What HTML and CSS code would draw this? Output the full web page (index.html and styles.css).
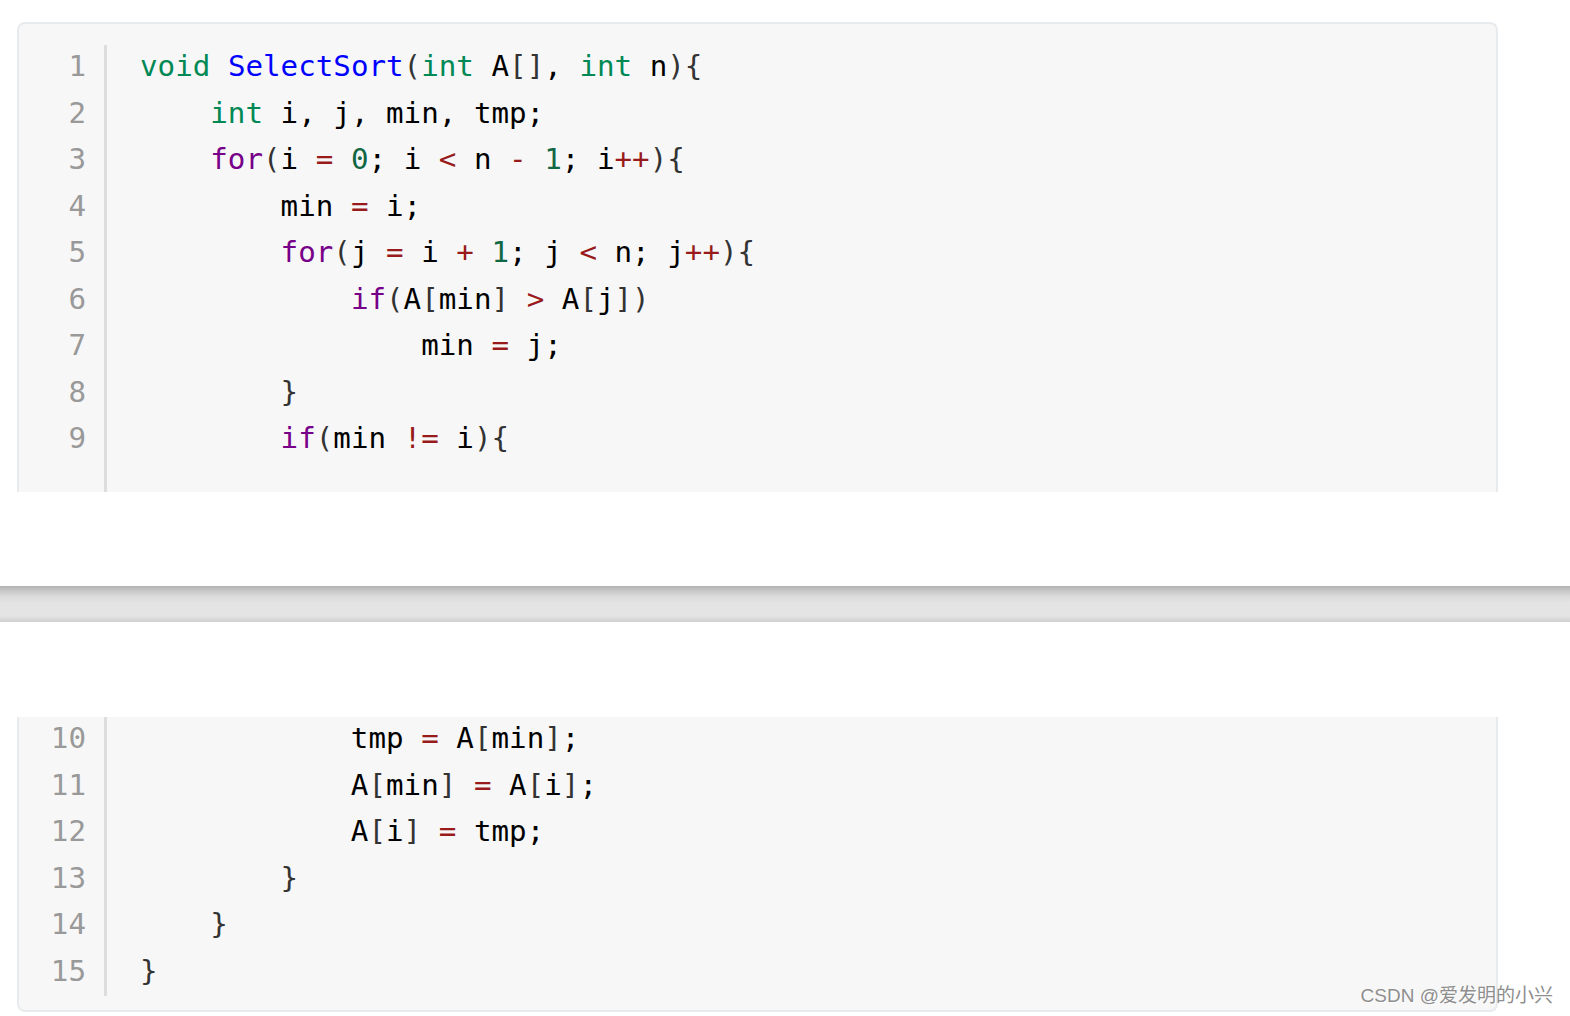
FILE: index.html
```html
<!DOCTYPE html>
<html>
<head>
<meta charset="utf-8">
<link rel="stylesheet" href="styles.css">
</head>
<body>
<div class="page">
  <section class="part part-top">
    <div class="card card-top">
      <div class="gutter">
        <div class="ln">1</div><div class="ln">2</div><div class="ln">3</div><div class="ln">4</div><div class="ln">5</div><div class="ln">6</div><div class="ln">7</div><div class="ln">8</div><div class="ln">9</div><div class="ln"></div>
      </div>
      <div class="code"><div class="cl"><span class="ty">void</span> <span class="df">SelectSort</span><span class="br">(</span><span class="ty">int</span> A<span class="br">[]</span>, <span class="ty">int</span> n<span class="br">){</span></div><div class="cl">    <span class="ty">int</span> i, j, min, tmp;</div><div class="cl">    <span class="kw">for</span><span class="br">(</span>i <span class="op">=</span> <span class="nu">0</span>; i <span class="op">&lt;</span> n <span class="op">-</span> <span class="nu">1</span>; i<span class="op">++</span><span class="br">){</span></div><div class="cl">        min <span class="op">=</span> i;</div><div class="cl">        <span class="kw">for</span><span class="br">(</span>j <span class="op">=</span> i <span class="op">+</span> <span class="nu">1</span>; j <span class="op">&lt;</span> n; j<span class="op">++</span><span class="br">){</span></div><div class="cl">            <span class="kw">if</span><span class="br">(</span>A<span class="br">[</span>min<span class="br">]</span> <span class="op">&gt;</span> A<span class="br">[</span>j<span class="br">])</span></div><div class="cl">                min <span class="op">=</span> j;</div><div class="cl">        <span class="br">}</span></div><div class="cl">        <span class="kw">if</span><span class="br">(</span>min <span class="op">!=</span> i<span class="br">){</span></div><div class="cl"> </div></div>
    </div>
  </section>
  <div class="band"></div>
  <section class="part part-bottom">
    <div class="card card-bottom">
      <div class="gutter">
        <div class="ln">10</div><div class="ln">11</div><div class="ln">12</div><div class="ln">13</div><div class="ln">14</div><div class="ln">15</div>
      </div>
      <div class="code"><div class="cl">            tmp <span class="op">=</span> A<span class="br">[</span>min<span class="br">]</span>;</div><div class="cl">            A<span class="br">[</span>min<span class="br">]</span> <span class="op">=</span> A<span class="br">[</span>i<span class="br">]</span>;</div><div class="cl">            A<span class="br">[</span>i<span class="br">]</span> <span class="op">=</span> tmp;</div><div class="cl">        <span class="br">}</span></div><div class="cl">    <span class="br">}</span></div><div class="cl"><span class="br">}</span></div></div>
    </div>
    <div class="watermark">CSDN @爱发明的小兴</div>
  </section>
</div>
</body>
</html>
```

FILE: styles.css
```css
html, body {
  margin: 0;
  padding: 0;
  background: #ffffff;
}

.page {
  width: 1570px;
  height: 1016px;
  display: flex;
  flex-direction: column;
  overflow: hidden;
}

.part {
  position: relative;
  padding-left: 17px;
  box-sizing: border-box;
}

.part-top {
  flex: none;
  height: 586px;
  padding-top: 22px;
}

.card {
  width: 1481px;
  box-sizing: border-box;
  background: #f7f7f7;
  border: 2px solid #e8ebee;
  display: flex;
  overflow: hidden;
  font-family: "DejaVu Sans Mono", "Liberation Mono", monospace;
  font-size: 29.2px;
}

.card-top {
  height: 470px;
  border-bottom: none;
  border-radius: 8px 8px 0 0;
  padding-top: 21px;
}

.card-bottom {
  border-top: none;
  border-radius: 0 0 8px 8px;
  padding-bottom: 14px;
}

.gutter {
  width: 88px;
  flex: none;
  box-sizing: border-box;
  padding-right: 18px;
  border-right: 3px solid #dddddd;
  color: #999999;
  text-align: right;
}

.ln {
  height: 46.5px;
  line-height: 42px;
}

.code {
  padding-left: 33px;
  white-space: pre;
  color: #000000;
}

.cl {
  height: 46.5px;
  line-height: 42px;
}

.ty { color: #008855; }
.df { color: #0000ff; }
.kw { color: #770088; }
.op { color: #981a1a; }
.nu { color: #116644; }
.br { color: #333333; }

.band {
  height: 36px;
  flex: none;
  background: linear-gradient(to bottom, #b3b3b3 0px, #c8c8c8 5px, #dcdcdc 11px, #e4e4e4 17px, #e4e4e4 30px, #d0d0d0 36px);
}

.part-bottom {
  padding-top: 95px;
  flex: 1;
}

.watermark {
  position: absolute;
  right: 17px;
  bottom: 9px;
  font-family: "Liberation Sans", "Noto Sans CJK SC", sans-serif;
  font-size: 19px;
  color: #8e8e8e;
  text-shadow: 1px 1px 0 #ffffff;
}
```
